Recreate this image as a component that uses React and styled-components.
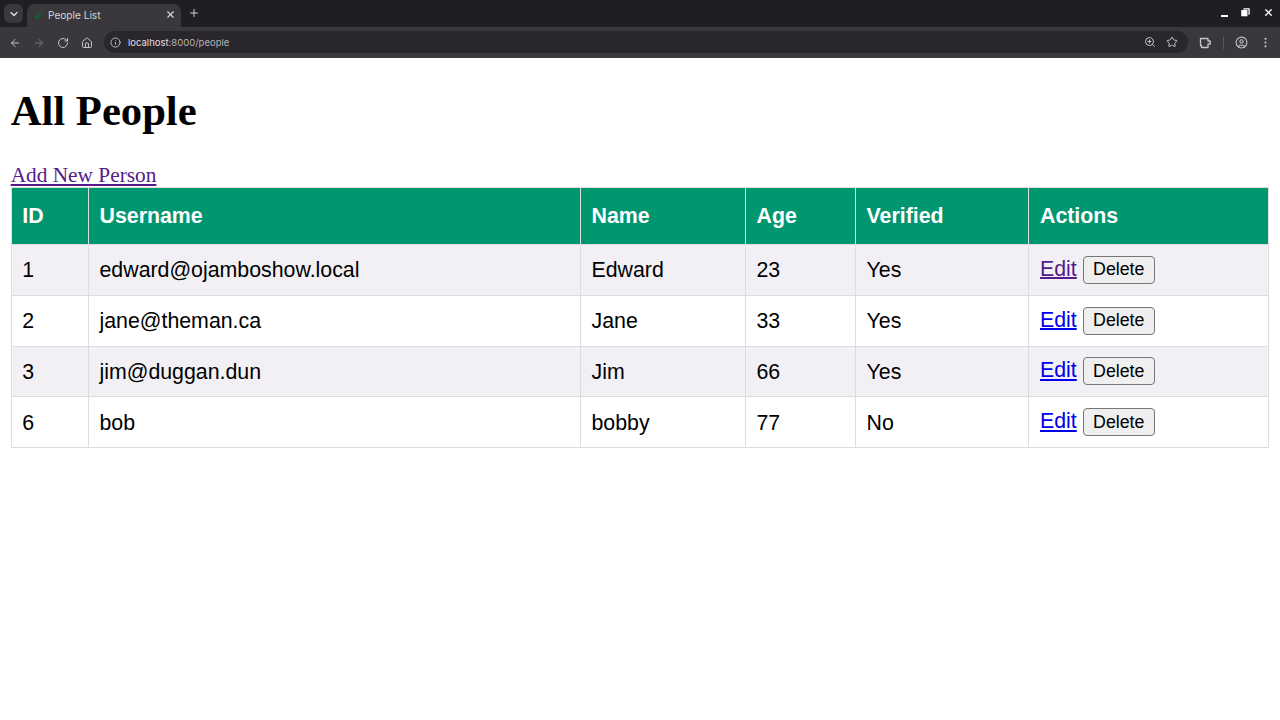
import React from 'react';
import styled, { createGlobalStyle } from 'styled-components';
import { ChevronDown, X, Plus, ArrowLeft, ArrowRight, RotateCw, Home, Info, ZoomIn, Star, CircleUser, EllipsisVertical } from 'lucide-react';

const Global = createGlobalStyle`
  html, body { margin: 0; padding: 0; background: #fff; }
  body { font-family: "Liberation Serif", serif; overflow: hidden; }
`;
const Browser = styled.div`height: 58px; display: flex; flex-direction: column; background: #3a383c; font-family: Inter, "Liberation Sans", sans-serif;`;
const TabBar = styled.div`height: 27px; background: #201e22; display: flex; align-items: flex-start; padding: 4px 0 0 4px; box-sizing: border-box; color: #e6e3e8;`;
const TabMenu = styled.div`width: 19px; height: 19px; border-radius: 6px; background: #3a383c; display: flex; align-items: center; justify-content: center; margin-right: 4px;`;
const Tab = styled.div`width: 154px; height: 23px; background: #3a383c; border-radius: 8px 8px 0 0; display: flex; align-items: center; padding: 0 5px 2px 6px; box-sizing: border-box; font-size: 10.1px; color: #d8d5da;`;
const TabTitle = styled.span`flex: 1; margin-left: 3px; white-space: nowrap;`;
const NewTab = styled.div`width: 26px; display: flex; justify-content: center; padding-top: 3px; color: #d0cdd2;`;
const Spacer = styled.div`flex: 1;`;
const WinControls = styled.div`display: flex; width: 59px; box-sizing: border-box; justify-content: space-between; padding: 3px 6px 0 0; color: #fff; align-items: center;`;
const MinimizeBar = styled.div`width: 7px; height: 2px; background: #fff; margin-top: 6px;`;
const RestoreIcon = () => (
  <svg width="9" height="9" viewBox="0 0 10 10" fill="none" stroke="#fff" strokeWidth="1.4">
    <rect x="1" y="3" width="5.5" height="5.5" fill="#fff" />
    <path d="M3.5 2V1h5.5v5.5H8" />
  </svg>
);
const ExtensionIcon = () => (
  <svg width="13" height="13" viewBox="0 0 13 13" fill="none" stroke="currentColor" strokeWidth="1.3" strokeLinejoin="round">
    <path d="M1.5 2.5h7.5v2.5h2.3v3H9v3.5H2.5V9.5h-1z" />
  </svg>
);
const NavBar = styled.div`height: 31px; display: flex; align-items: center; padding: 0 0 0 8px; box-sizing: border-box; color: #c7c4c9;`;
const NavButton = styled.div`width: 24px; display: flex; justify-content: center; color: ${p => p.$dim ? '#77747a' : '#c7c4c9'};`;
const NavButtons = styled.div`display: flex; margin-left: -5px; margin-right: 5px;`;
const Omnibox = styled.div`width: 1084px; height: 22px; border-radius: 11px; background: #29272b; display: flex; align-items: center; padding: 0 10px 0 5px; box-sizing: border-box; margin-bottom: 1px;`;
const InfoChip = styled.div`width: 12px; height: 14px; display: flex; align-items: center; justify-content: center; margin-right: 7px;`;
const Url = styled.span`font-size: 9.5px; color: #b5b2b7; flex: 1; white-space: nowrap;`;
const Host = styled.span`color: #e2dfe4;`;
const OmniIcons = styled.div`display: flex; gap: 10px; align-items: center;`;
const RightIcons = styled.div`display: flex; align-items: center; margin-left: 11px;`;
const Divider = styled.div`width: 1px; height: 12px; background: #5a585c; margin: 0 11px 0 11px;`;
const MenuButton = styled(NavButton)`margin-left: 5px;`;
const Main = styled.main`padding: 0 10.67px;`;
const Heading = styled.h1`font-size: 42.67px; line-height: 50px; font-weight: 700; margin: 28px 0 27px; color: #000;`;
const AddLink = styled.a`display: block; width: max-content; font-size: 21.33px; line-height: 24.5px; height: 24px; color: #551a8b; text-decoration: underline;`;
const Table = styled.table`table-layout: fixed; width: 1257.5px; border-collapse: collapse; font-family: "Liberation Sans", Arial, sans-serif; font-size: 21.33px;`;
const Th = styled.th`height: 57px; box-sizing: border-box; background: #009670; color: #fff; text-align: left; font-weight: 700; padding: 0 10.67px; border: 1.33px solid #ddd;`;
const Td = styled.td`height: 50.75px; box-sizing: border-box; padding: 2px 10.67px 0; border: 1.33px solid #ddd; color: #000; white-space: nowrap;`;
const ActionsCell = styled(Td)`padding-top: 0;`;
const Row = styled.tr`background: ${p => p.$odd ? '#f2f0f4' : '#fff'};`;
const EditLink = styled.a`color: ${p => p.$visited ? '#551a8b' : '#0000ee'}; text-decoration: underline;`;
const DeleteButton = styled.button`font-family: "Liberation Sans", Arial, sans-serif; font-size: 17.78px; height: 28px; width: 72px; margin-left: 6px; padding: 0; box-sizing: border-box; background: #efefef; border: 1.33px solid #767676; border-radius: 4px; color: #000; vertical-align: 0;`;

const people = [
  { id: 1, username: 'edward@ojamboshow.local', name: 'Edward', age: 23, verified: 'Yes', visited: true },
  { id: 2, username: 'jane@theman.ca', name: 'Jane', age: 33, verified: 'Yes' },
  { id: 3, username: 'jim@duggan.dun', name: 'Jim', age: 66, verified: 'Yes' },
  { id: 6, username: 'bob', name: 'bobby', age: 77, verified: 'No' },
];
const widths = [77.2, 492, 165, 110, 173.5, 239.8];
const headers = ['ID', 'Username', 'Name', 'Age', 'Verified', 'Actions'];

export default function App() {
  return (
    <>
      <Global />
      <Browser>
        <TabBar>
          <TabMenu><ChevronDown size={12} strokeWidth={2.5} /></TabMenu>
          <Tab>
            <svg width="12" height="12" viewBox="0 0 12 12"><path d="M1 7l3 4 7-10-6 5-2 1z" fill="#14602c" /></svg>
            <TabTitle>People List</TabTitle>
            <X size={11} strokeWidth={2.5} />
          </Tab>
          <NewTab><Plus size={12} strokeWidth={2} /></NewTab>
          <Spacer />
          <WinControls>
            <MinimizeBar />
            <RestoreIcon />
            <X size={11} strokeWidth={2.8} />
          </WinControls>
        </TabBar>
        <NavBar>
          <NavButtons>
            <NavButton><ArrowLeft size={12} strokeWidth={2} /></NavButton>
            <NavButton $dim><ArrowRight size={12} strokeWidth={2} /></NavButton>
            <NavButton><RotateCw size={12} strokeWidth={2} /></NavButton>
            <NavButton><Home size={12} strokeWidth={2} /></NavButton>
          </NavButtons>
          <Omnibox>
            <InfoChip><Info size={11} strokeWidth={2} /></InfoChip>
            <Url><Host>localhost</Host>:8000/people</Url>
            <OmniIcons>
              <ZoomIn size={12} strokeWidth={2} />
              <Star size={12} strokeWidth={2} />
            </OmniIcons>
          </Omnibox>
          <RightIcons>
            <ExtensionIcon />
            <Divider />
            <CircleUser size={13} strokeWidth={2} />
            <MenuButton><EllipsisVertical size={13} strokeWidth={2} /></MenuButton>
          </RightIcons>
        </NavBar>
      </Browser>
      <Main>
        <Heading>All People</Heading>
        <AddLink href="#">Add New Person</AddLink>
        <Table>
          <colgroup>{widths.map((w, i) => <col key={i} style={{ width: w }} />)}</colgroup>
          <thead>
            <tr>{headers.map(h => <Th key={h}>{h}</Th>)}</tr>
          </thead>
          <tbody>
            {people.map((p, i) => (
              <Row key={p.id} $odd={i % 2 === 0}>
                <Td>{p.id}</Td>
                <Td>{p.username}</Td>
                <Td>{p.name}</Td>
                <Td>{p.age}</Td>
                <Td>{p.verified}</Td>
                <ActionsCell>
                  <EditLink href="#" $visited={p.visited}>Edit</EditLink>
                  <DeleteButton>Delete</DeleteButton>
                </ActionsCell>
              </Row>
            ))}
          </tbody>
        </Table>
      </Main>
    </>
  );
}
